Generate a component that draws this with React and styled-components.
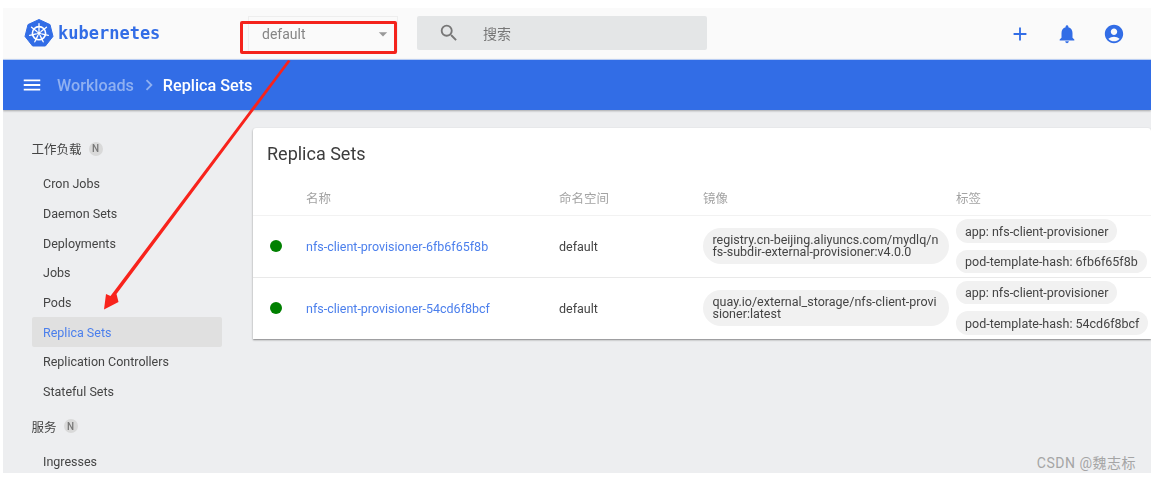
import React from "react";
import styled, { createGlobalStyle } from "styled-components";
import { MdAdd, MdNotifications, MdAccountCircle, MdMenu, MdSearch, MdChevronRight, MdArrowDropDown } from "react-icons/md";

const Global = createGlobalStyle`
  html, body { margin: 0; padding: 0; background: #fff; }
  body { font-family: Roboto, "Noto Sans CJK SC", sans-serif; overflow: hidden; }
  * { box-sizing: border-box; }
`;

const Page = styled.div`
  position: relative;
  width: 1151px;
  height: 477px;
  padding: 8px 0 4px 3px;
  background: #fff;
  overflow: hidden;
`;
const Frame = styled.div`
  height: 465px;
  display: flex;
  flex-direction: column;
  background: #edeef0;
  overflow: hidden;
  filter: blur(0.4px);
`;
const TopBar = styled.header`
  height: 51px;
  flex: none;
  display: flex;
  align-items: center;
  background: #fafafa;
  padding-left: 21px;
`;
const Brand = styled.div`
  width: 224px;
  display: flex;
  align-items: center;
  gap: 4px;
  margin-top: -1px;
`;
const BrandName = styled.span`
  font-family: "DejaVu Sans Mono", monospace;
  font-weight: 700;
  font-size: 17px;
  color: #326de6;
  line-height: 1;
`;
const NamespaceSelect = styled.div`
  width: 150px;
  height: 36px;
  display: flex;
  align-items: center;
  justify-content: space-between;
  padding: 0 4px 0 13px;
  border: 1px solid #eee;
  font-size: 14px;
  color: #858585;
`;
const SearchBox = styled.div`
  width: 290px;
  height: 34px;
  margin-left: 19px;
  margin-top: -1px;
  display: flex;
  align-items: center;
  gap: 23px;
  padding-left: 21px;
  border-radius: 2px;
  background: #e4e6e7;
  color: #777;
  font-size: 14px;
`;
const Actions = styled.div`
  margin-left: auto;
  margin-right: 26px;
  width: 116px;
  display: flex;
  justify-content: space-between;
  color: #326de6;
`;
const NavBar = styled.div`
  height: 51px;
  flex: none;
  display: flex;
  align-items: center;
  padding-left: 18px;
  background: #326de6;
  border-top: 1px solid #b9cdf3;
  box-shadow: 0 1px 2px rgba(0, 0, 0, 0.3);
  color: #fff;
  font-size: 16.2px;
  font-weight: 500;
  position: relative;
`;
const Crumb = styled.span`
  margin-left: 14px;
  color: #8fb0f1;
`;
const Current = styled.span`
  color: #fff;
`;
const CrumbArrow = styled.span`
  display: flex;
  margin: 0 3px 0 4px;
  color: #8fb0f1;
`;
const Body = styled.div`
  flex: 1;
  min-height: 0;
  display: flex;
`;
const Sidebar = styled.nav`
  width: 250px;
  flex: none;
  padding: 18.4px 0 0 28.5px;
`;
const GroupHead = styled.div`
  height: 40.4px;
  display: flex;
  align-items: center;
  gap: 7px;
  font-size: 12.5px;
  color: #444;
`;
const NBadge = styled.span`
  width: 14px;
  height: 14px;
  border-radius: 50%;
  background: #d9d9d9;
  color: #777;
  font-size: 10px;
  font-weight: 500;
  display: flex;
  align-items: center;
  justify-content: center;
`;
const NavItem = styled.div`
  width: 190px;
  height: 29.7px;
  display: flex;
  align-items: center;
  padding-left: 11.5px;
  font-size: 12.5px;
  border-radius: 2px;
  color: ${(p) => (p.$active ? "#4b7fec" : "#444")};
  background: ${(p) => (p.$active ? "#e0e0e0" : "transparent")};
`;
const Card = styled.section`
  width: 898px;
  height: 211px;
  margin-top: 18px;
  flex: none;
  background: #fff;
  border-radius: 3px 3px 0 0;
  box-shadow: 0 1px 2px rgba(0, 0, 0, 0.45);
`;
const CardTitle = styled.h2`
  height: 51px;
  margin: 0;
  padding: 0 0 0 14px;
  display: flex;
  align-items: center;
  font-size: 18px;
  font-weight: 400;
  color: #3c3c3c;
`;
const Row = styled.div`
  display: grid;
  grid-template-columns: 53px 253px 144px 253px 1fr;
  align-items: center;
  font-size: 12.5px;
  color: #444;
  height: ${(p) => p.$h}px;
  border-bottom: 1px solid ${(p) => p.$line};
`;
const HeadCell = styled.div`
  color: #a3a3a3;
  font-size: 12.5px;
`;
const Dot = styled.span`
  width: 12px;
  height: 12px;
  margin-left: 17px;
  border-radius: 50%;
  background: #008000;
`;
const Name = styled.a`
  color: #4b7fec;
  padding-top: 1px;
`;
const Plain = styled.span`
  padding-top: 1px;
`;
const ImagePill = styled.div`
  width: 246px;
  height: 36px;
  padding: 0 9.5px;
  display: flex;
  align-items: center;
  border-radius: 18px;
  background: #f1f1f1;
  font-size: 12.5px;
  line-height: 12px;
  word-break: break-all;
`;
const Labels = styled.div`
  display: flex;
  flex-direction: column;
  align-items: flex-start;
  gap: 7px;
`;
const LabelPill = styled.span`
  height: 23.5px;
  display: flex;
  align-items: center;
  padding: 0 9px;
  border-radius: 12px;
  background: #f1f1f1;
  font-size: 12.5px;
  white-space: nowrap;
`;
const SelectMark = styled.div`
  position: absolute;
  left: 240px;
  top: 21px;
  width: 157px;
  height: 33px;
  border: 3px solid #f4231c;
  border-radius: 2px;
`;
const ArrowLayer = styled.svg`
  position: absolute;
  left: 0;
  top: 0;
  pointer-events: none;
`;
const Watermark = styled.div`
  position: absolute;
  right: 15px;
  top: 452px;
  font-size: 14px;
  letter-spacing: 0.5px;
  color: #a5a5a5;
`;

const KubeLogo = () => (
  <svg width="30" height="28" viewBox="0 0 30 28" aria-hidden="true">
    <path d="M15 0.5 L26 5.6 L29 17.4 L21.4 27 H8.6 L1 17.4 L4 5.6 Z" fill="#326de6" stroke="#326de6" strokeLinejoin="round" />
    <g stroke="#fff" fill="none" strokeLinecap="round">
      <circle cx="15" cy="14.2" r="6.6" strokeWidth="1.6" />
      <circle cx="15" cy="14.2" r="1.6" fill="#fff" strokeWidth="0.6" />
      <path strokeWidth="1.3" d="M15 4.6V11.5M22.5 8.2L17 12.5M24.3 16.3L17.7 14.8M19.2 22.8L16.2 16.6M10.8 22.8L13.8 16.6M5.7 16.3L12.3 14.8M7.5 8.2L13 12.5" />
    </g>
  </svg>
);

const navA = ["Cron Jobs", "Daemon Sets", "Deployments", "Jobs", "Pods", "Replica Sets", "Replication Controllers", "Stateful Sets"];
const rows = [
  {
    name: "nfs-client-provisioner-6fb6f65f8b",
    image: "registry.cn-beijing.aliyuncs.com/mydlq/nfs-subdir-external-provisioner:v4.0.0",
    hash: "6fb6f65f8b",
    line: "#e9e9e9",
  },
  {
    name: "nfs-client-provisioner-54cd6f8bcf",
    image: "quay.io/external_storage/nfs-client-provisioner:latest",
    hash: "54cd6f8bcf",
    line: "transparent",
  },
];

export default function App() {
  return (
    <Page>
      <Global />
      <Frame>
        <TopBar>
          <Brand>
            <KubeLogo />
            <BrandName>kubernetes</BrandName>
          </Brand>
          <NamespaceSelect>
            default
            <MdArrowDropDown size={20} color="#999" />
          </NamespaceSelect>
          <SearchBox>
            <MdSearch size={22} color="#777" />
            搜索
          </SearchBox>
          <Actions>
            <MdAdd size={22} />
            <MdNotifications size={22} />
            <MdAccountCircle size={22} />
          </Actions>
        </TopBar>
        <NavBar>
          <MdMenu size={22} />
          <Crumb>Workloads</Crumb>
          <CrumbArrow><MdChevronRight size={22} /></CrumbArrow>
          <Current>Replica Sets</Current>
        </NavBar>
        <Body>
          <Sidebar>
            <GroupHead>工作负载<NBadge>N</NBadge></GroupHead>
            {navA.map((n) => (
              <NavItem key={n} $active={n === "Replica Sets"}>{n}</NavItem>
            ))}
            <GroupHead>服务<NBadge>N</NBadge></GroupHead>
            <NavItem>Ingresses</NavItem>
          </Sidebar>
          <Card>
            <CardTitle>Replica Sets</CardTitle>
            <Row $h={37} $line="#f2f2f2">
              <span />
              <HeadCell>名称</HeadCell>
              <HeadCell>命名空间</HeadCell>
              <HeadCell>镜像</HeadCell>
              <HeadCell>标签</HeadCell>
            </Row>
            {rows.map((r) => (
              <Row key={r.name} $h={61.5} $line={r.line}>
                <Dot />
                <Name>{r.name}</Name>
                <Plain>default</Plain>
                <ImagePill><span>{r.image}</span></ImagePill>
                <Labels>
                  <LabelPill>app: nfs-client-provisioner</LabelPill>
                  <LabelPill>pod-template-hash: {r.hash}</LabelPill>
                </Labels>
              </Row>
            ))}
          </Card>
        </Body>
      </Frame>
      <SelectMark />
      <ArrowLayer width="1151" height="477" viewBox="0 0 1151 477" aria-hidden="true">
        <polygon points="288,60 290.5,61 116.5,294 118.5,302 104,309.5 106,294 110.5,296" fill="#f8231c" />
      </ArrowLayer>
      <Watermark>CSDN @魏志标</Watermark>
    </Page>
  );
}
